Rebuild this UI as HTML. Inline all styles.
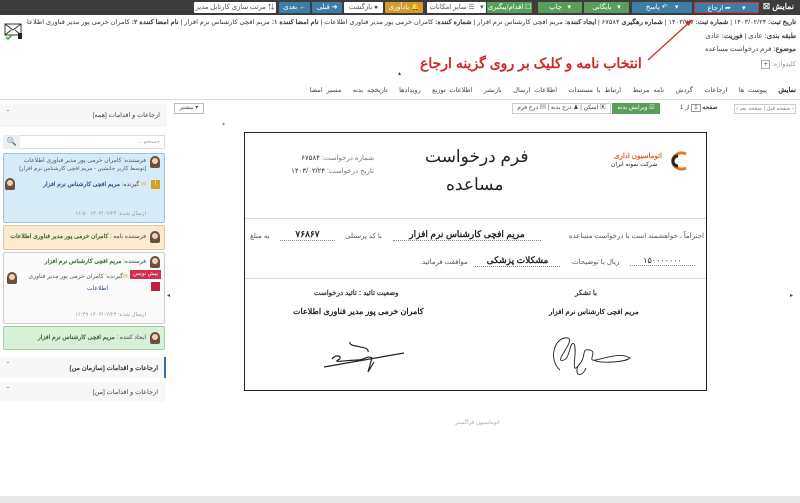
<!DOCTYPE html>
<html><head><meta charset="utf-8">
<style>
*{box-sizing:border-box;margin:0;padding:0}
html,body{overflow:hidden}
body{width:800px;height:503px;background:#fff;font-family:"Liberation Sans","Noto Sans CJK SC",sans-serif;font-size:7px;color:#444;position:relative;direction:rtl}
.a{position:absolute;white-space:nowrap}
.bar{left:0;top:0;width:800px;height:15px;background:#3d3d3d}
.btn{position:absolute;top:2px;height:11px;font-size:6.8px;color:#fff;text-align:center;line-height:11px;border-radius:1px}
.bl{background:#3b7ea8}.gr{background:#5a9e5a}.wh{background:#fff;color:#555}.or{background:#d39b2a}
.card{position:absolute;left:3px;width:162px;border:1px solid #ccc;border-radius:2px}
.av{position:absolute;width:10px;height:12px;border-radius:5px 5px 2px 2px;background:#6b5040}
.av:after{content:"";position:absolute;left:2px;top:2px;width:6px;height:6px;border-radius:3px;background:#f0d0b8}
.dot{border-bottom:1px dotted #888}
</style></head><body>
<div class="a bar"></div>
<div class="a" style="right:6px;top:2px;color:#fff;font-weight:bold;font-size:8px">نمایش ☒</div>
<div class="btn bl" style="left:694px;width:65px;border:1px solid #e03030">▾ &nbsp;&nbsp;&nbsp;&nbsp; ➦ ارجاع</div>
<div class="btn bl" style="left:632px;width:60px">▾ &nbsp;&nbsp; ↶ پاسخ</div>
<div class="btn gr" style="left:584px;width:45px">▾ &nbsp; بایگانی</div>
<div class="btn gr" style="left:538px;width:44px">▾ &nbsp; چاپ</div>
<div class="btn gr" style="left:487px;width:45px">☐ اقدام/پیگیری</div>
<div class="btn wh" style="left:427px;width:59px">▾ &nbsp; ☰ سایر امکانات</div>
<div class="btn or" style="left:385px;width:38px">🔔 یادآوری</div>
<div class="btn wh" style="left:344px;width:39px">● بازگشت</div>
<div class="btn bl" style="left:312px;width:30px">➜ قبلی</div>
<div class="btn bl" style="left:279px;width:31px">← بعدی</div>
<div class="btn wh" style="left:194px;width:82px">⇅ مرتب سازی کارتابل مدیر</div>
<div class="a" style="right:4px;left:26px;overflow:hidden;top:18px;font-size:6.7px;color:#333"><b>تاریخ ثبت:</b> ۱۴۰۳/۰۲/۲۴ | <b>شماره ثبت:</b> ۱۴۰۳/۷/۷ | <b>شماره رهگیری</b> ۶۷۵۸۴ | <b>ایجاد کننده:</b> مریم افچی کارشناس نرم افزار | <b>شماره کننده:</b> کامران خرمی پور مدیر فناوری اطلاعات | <b>نام امضا کننده ۱:</b> مریم افچی کارشناس نرم افزار | <b>نام امضا کننده ۲:</b> کامران خرمی پور مدیر فناوری اطلاعات</div>
<svg class="a" style="left:4px;top:22px" width="20" height="18"><rect x="1" y="2" width="16" height="11" fill="#fff" stroke="#333"/><path d="M1 2l8 6 8-6M1 13l6-5M17 13l-6-5" fill="none" stroke="#333"/><path d="M2 15l2 2 4-4" stroke="#3a3" fill="none" stroke-width="1.5"/><rect x="14" y="11" width="4" height="6" fill="#222"/></svg>
<div class="a" style="right:4px;top:32px;font-size:6.8px"><b>طبقه بندی:</b> عادی | <b>فوریت:</b> عادی</div>
<div class="a" style="right:4px;top:45px;font-size:6.8px"><b>موضوع:</b> فرم درخواست مساعده</div>
<div class="a" style="right:4px;top:60px;font-size:6.5px;color:#999">کلیدواژه: <span style="display:inline-block;border:1px solid #aaa;color:#333;width:9px;height:9px;text-align:center;line-height:8px">+</span></div>
<div class="a" style="left:420px;top:55px;font-size:14px;font-weight:bold;color:#d02828">انتخاب نامه و کلیک بر روی گزینه ارجاع</div>
<svg class="a" style="left:640px;top:14px" width="60" height="50"><path d="M8 46L52 6" stroke="#c83030" stroke-width="1.3"/><path d="M52 6l-7 2 4 4z" fill="#c83030"/></svg>
<div class="a" style="left:398px;top:70px;font-size:6px">▴</div>
<div class="a" style="right:4px;top:86px;font-size:6.5px;word-spacing:2px"><b style="color:#222">نمایش</b> &nbsp; پیوست ها &nbsp; ارجاعات &nbsp; گردش &nbsp; نامه مرتبط &nbsp; ارتباط با مستندات &nbsp; اطلاعات ارسال &nbsp; بازنشر &nbsp; اطلاعات توزیع &nbsp; رویدادها &nbsp; تاریخچه بدنه &nbsp; مسیر امضا</div>
<div class="a" style="left:0;top:99px;width:800px;border-top:1px solid #ddd"></div>
<div class="a" style="left:174px;top:103px;width:30px;height:11px;border:1px solid #bbb;font-size:6px;line-height:9px;text-align:center">▾ بیشتر</div>
<div class="a" style="left:734px;top:104px;width:62px;height:10px;border:1px solid #ccc;font-size:5.5px;line-height:8px;color:#888;text-align:center">‹ صفحه قبل | صفحه بعد ›</div>
<div class="a" style="left:680px;top:104px;font-size:6px"><b>صفحه</b> <span style="border:1px solid #999;padding:0 2px">1</span> از 1</div>
<div class="a" style="left:612px;top:103px;width:48px;height:11px;background:#5a9e5a;color:#fff;font-size:6px;line-height:11px;text-align:center">☑ ویرایش بدنه</div>
<div class="a" style="left:512px;top:103px;width:99px;height:11px;border:1px solid #ccc;font-size:6px;line-height:9px;text-align:center">▣ اسکن | ♟ درج بدنه | ▤ درج فرم</div>
<div class="a" style="left:222px;top:120px;font-size:6px;color:#999">▴</div>
<div class="a" style="left:0;top:104px;width:167px;height:22px;background:#f7f7f7;border-bottom:1px solid #eee"></div>
<div class="a" style="right:640px;top:111px;font-size:6.5px">ارجاعات و اقدامات [همه]</div>
<div class="a" style="left:7px;top:111px;font-size:6px">ˆ</div>
<div class="a" style="left:3px;top:135px;width:162px;height:14px;border:1px solid #ddd"></div>
<div class="a" style="left:3px;top:135px;width:17px;height:14px;background:#eee;font-size:8px;text-align:center;line-height:13px">🔍</div>
<div class="a" style="right:640px;top:139px;font-size:5.5px;color:#aaa">جستجو ...</div>
<div class="card" style="top:153px;height:70px;background:#d6ebf8;border-color:#9cc5e0"></div>
<div class="av" style="left:150px;top:156px"></div>
<div class="a" style="right:654px;top:157px;font-size:6px;color:#555">فرستنده: کامران خرمی پور مدیر فناوری اطلاعات</div>
<div class="a" style="right:654px;top:166px;font-size:5.6px;color:#555">[توسط کاربر جانشین - مریم افچی کارشناس نرم افزار]</div>
<div class="a" style="left:151px;top:180px;width:9px;height:9px;background:#d4a020;color:#fff;font-size:6px;text-align:center;line-height:9px">!</div>
<div class="a" style="right:654px;top:181px;font-size:6px"><span style="color:#e0b040">✉</span> گیرنده: <b style="color:#2b4f90">مریم افچی کارشناس نرم افزار</b></div>
<div class="av" style="left:5px;top:178px"></div>
<div class="a" style="right:654px;top:211px;font-size:5.5px;color:#999">ارسال شده: ۱۴۰۳/۰۲/۲۴ ۱۶:۵۰</div>
<div class="card" style="top:225px;height:25px;background:#fbe9d0;border-color:#e0c8a0"></div>
<div class="av" style="left:150px;top:231px"></div>
<div class="a" style="right:654px;top:233px;font-size:6px">فرستنده نامه : <b style="color:#2a6a2a">کامران خرمی پور مدیر فناوری اطلاعات</b></div>
<div class="card" style="top:252px;height:72px;background:#fafafa"></div>
<div class="av" style="left:150px;top:256px"></div>
<div class="a" style="right:654px;top:258px;font-size:6px">فرستنده: <b style="color:#2a6a2a">مریم افچی کارشناس نرم افزار</b></div>
<div class="a" style="left:130px;top:270px;width:31px;height:9px;background:#d03050;color:#fff;font-size:5.5px;text-align:center;line-height:9px">پیش نویس</div>
<div class="a" style="left:151px;top:282px;width:9px;height:9px;background:#c02040"></div>
<div class="a" style="right:672px;top:273px;font-size:6px;color:#555"><span style="color:#e0b040">✉</span>گیرنده: کامران خرمی پور مدیر فناوری</div>
<div class="a" style="right:692px;top:285px;font-size:6px;color:#2b4f90">اطلاعات</div>
<div class="av" style="left:7px;top:272px"></div>
<div class="a" style="right:654px;top:312px;font-size:5.5px;color:#999">ارسال شده: ۱۴۰۳/۰۲/۲۴ ۱۶:۴۹</div>
<div class="card" style="top:326px;height:24px;background:#d8efd8;border-color:#a8d0a8"></div>
<div class="av" style="left:150px;top:332px"></div>
<div class="a" style="right:654px;top:334px;font-size:6px">ایجاد کننده : <b style="color:#2a6a2a">مریم افچی کارشناس نرم افزار</b></div>
<div class="a" style="left:0;top:357px;width:166px;height:21px;background:#f7f7f7;border-right:2px solid #3b6fa0"></div>
<div class="a" style="right:642px;top:364px;font-size:6.5px;font-weight:bold;color:#333">ارجاعات و اقدامات [سازمان من]</div>
<div class="a" style="left:7px;top:363px;font-size:6px">ˇ</div>
<div class="a" style="left:0;top:382px;width:166px;height:20px;background:#f7f7f7"></div>
<div class="a" style="right:642px;top:388px;font-size:6.5px">ارجاعات و اقدامات [من]</div>
<div class="a" style="left:7px;top:388px;font-size:6px">ˇ</div>
<div class="a" style="left:167px;top:292px;font-size:6px">◂</div>
<div class="a" style="left:790px;top:292px;font-size:6px">▸</div>
<div class="a" style="left:244px;top:132px;width:463px;height:259px;border:1px solid #222;background:#fff"></div>
<div class="a" style="left:245px;top:218px;width:461px;border-top:1px solid #ddd"></div>
<div class="a" style="left:245px;top:278px;width:461px;border-top:1px solid #ddd"></div>
<svg class="a" style="left:666px;top:151px" width="24" height="20"><path d="M20 3a9 8 0 1 0 0 14" fill="none" stroke="#e8782a" stroke-width="3"/><path d="M12 5a5 5 0 1 0 0 10" fill="none" stroke="#222" stroke-width="3"/></svg>
<div class="a" style="left:614px;top:152px;font-size:7px;color:#e06020;font-weight:bold">اتوماسیون اداری</div>
<div class="a" style="left:611px;top:161px;font-size:6px;color:#222">شرکت نمونه ایران</div>
<div class="a" style="left:425px;top:147px;font-size:17px;color:#222">فرم درخواست</div>
<div class="a" style="left:446px;top:175px;font-size:17px;color:#222">مساعده</div>
<div class="a" style="right:426px;top:154px;font-size:7px;color:#777">شماره درخواست: <span style="color:#333">۶۷۵۸۴</span></div>
<div class="a" style="right:426px;top:167px;font-size:7px;color:#777">تاریخ درخواست: <span style="color:#333">۱۴۰۳/۰۲/۲۴</span></div>
<div class="a" style="right:96px;top:232px;font-size:7px;color:#555">احتراماً ، خواهشمند است با درخواست مساعده</div>
<div class="a dot" style="left:393px;top:229px;width:148px;text-align:center;font-size:9px;font-weight:bold;color:#222">مریم افچی کارشناس نرم افزار</div>
<div class="a" style="left:345px;top:232px;font-size:7px;color:#555">با کد پرسنلی</div>
<div class="a dot" style="left:280px;top:229px;width:55px;text-align:center;font-size:9px;font-weight:bold;color:#222">۷۶۸۶۷</div>
<div class="a" style="left:250px;top:232px;font-size:7px;color:#555">به مبلغ</div>
<div class="a dot" style="left:630px;top:256px;width:65px;text-align:center;font-size:8px;color:#222">۱۵۰۰۰۰۰۰۰</div>
<div class="a" style="left:572px;top:258px;font-size:7px;color:#555">ریال با توضیحات</div>
<div class="a dot" style="left:475px;top:255px;width:85px;text-align:center;font-size:9px;font-weight:bold;color:#222">مشکلات پزشکی</div>
<div class="a" style="left:420px;top:258px;font-size:7px;color:#555">موافقت فرمائید.</div>
<div class="a" style="left:575px;top:289px;font-size:7px;font-weight:bold;color:#333">با تشکر</div>
<div class="a" style="left:549px;top:308px;font-size:7px;font-weight:bold;color:#222">مریم افچی کارشناس نرم افزار</div>
<div class="a" style="left:314px;top:289px;font-size:7px;font-weight:bold;color:#333">وضعیت تائید : تائید درخواست</div>
<div class="a" style="left:293px;top:307px;font-size:8px;font-weight:bold;color:#222">کامران خرمی پور مدیر فناوری اطلاعات</div>
<svg class="a" style="left:322px;top:337px" width="88" height="36"><path d="M28 5c-2 6 20 3 18 10M2 30L82 16M10 22c4-6 12-2 6 1s10 0 20 0c6 0 10-5 14-2l-4 14 6-10" fill="none" stroke="#222" stroke-width="1.2"/></svg>
<svg class="a" style="left:540px;top:330px" width="92" height="50"><path d="M20 40C8 30 14 6 28 8 36 10 12 34 24 30 30 28 30 10 34 14 38 20 30 46 38 36 48 26 40 18 50 20 58 22 46 32 56 30c10-2 24-8 34-2-4 4-30 6-36 2M38 36c-4 10 4 12 8 2" fill="none" stroke="#222" stroke-width="0.9"/></svg>
<div class="a" style="left:455px;top:420px;font-size:5.5px;color:#aaa">اتوماسیون فراگستر</div>
<div class="a" style="left:0;top:496px;width:800px;height:7px;background:#e8e8e8"></div>
</body></html>
